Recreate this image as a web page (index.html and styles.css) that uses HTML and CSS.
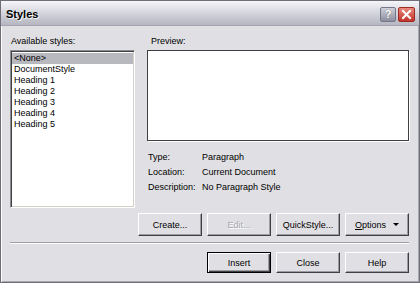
FILE: index.html
```html
<!DOCTYPE html>
<html>
<head>
<meta charset="utf-8">
<link rel="stylesheet" href="styles.css">
</head>
<body>
<div class="window">
  <div class="titlebar">
    <span class="title">Styles</span>
    <div class="caption-buttons">
      <span class="cap-btn help">?</span>
      <span class="cap-btn close">
        <svg width="11" height="11" viewBox="0 0 11 11"><path d="M2 2 L9 9 M9 2 L2 9" stroke="#fff" stroke-width="2" stroke-linecap="square"/></svg>
      </span>
    </div>
  </div>
  <div class="content">
    <div class="top">
      <div class="left">
        <div class="label">Available styles:</div>
        <div class="listbox">
          <div class="item selected">&lt;None&gt;</div>
          <div class="item">DocumentStyle</div>
          <div class="item">Heading 1</div>
          <div class="item">Heading 2</div>
          <div class="item">Heading 3</div>
          <div class="item">Heading 4</div>
          <div class="item">Heading 5</div>
        </div>
      </div>
      <div class="right">
        <div class="label preview-label">Preview:</div>
        <div class="preview"></div>
        <div class="info">
          <div class="row"><span class="key">Type:</span><span>Paragraph</span></div>
          <div class="row"><span class="key">Location:</span><span>Current Document</span></div>
          <div class="row"><span class="key">Description:</span><span>No Paragraph Style</span></div>
        </div>
      </div>
    </div>
    <div class="actions">
      <button class="btn">Create...</button>
      <button class="btn disabled">Edit...</button>
      <button class="btn">QuickStyle...</button>
      <button class="btn options"><span><u>O</u>ptions</span><span class="arrow"></span></button>
    </div>
    <div class="separator"></div>
    <div class="footer">
      <button class="btn default">Insert</button>
      <button class="btn">Close</button>
      <button class="btn">Help</button>
    </div>
  </div>
</div>
</body>
</html>
```
FILE: styles.css
```css
html, body {
  margin: 0;
  padding: 0;
  background: #e0dfe3;
}
body {
  font-family: "Liberation Sans", Arial, sans-serif;
  font-size: 9px;
  color: #000;
}
.window {
  width: 420px;
  height: 283px;
  box-sizing: border-box;
  border: 1px solid #6e6e78;
  box-shadow: inset 1px 1px 0 #fdfdfd, inset -1px -1px 0 #a8a8b0;
  background: #e0dfe3;
  display: flex;
  flex-direction: column;
}
.titlebar {
  height: 24px;
  flex: none;
  display: flex;
  align-items: center;
  justify-content: space-between;
  padding: 0 4px 0 5px;
  background: linear-gradient(to bottom, #f6f6f9 0%, #e2e2e8 30%, #c8c8d2 70%, #b6b6c2 100%);
  border-bottom: 1px solid #a4a4b0;
}
.title {
  font-weight: bold;
  font-size: 11px;
  color: #000;
  text-shadow: 1px 1px 0 #f4f4f4;
  padding-top: 1px;
}
.caption-buttons {
  display: flex;
  gap: 2px;
  padding-top: 2px;
}
.cap-btn {
  width: 16px;
  height: 15px;
  border-radius: 2px;
  display: flex;
  align-items: center;
  justify-content: center;
  box-sizing: border-box;
}
.help {
  background: linear-gradient(to bottom, #cfd0da, #8c8e9e);
  border: 1px solid #74768a;
  color: #fff;
  font-weight: bold;
  font-size: 11px;
  text-shadow: 0 0 1px #555;
}
.close {
  width: 17px;
  background: linear-gradient(to bottom, #e88a7c, #c3322a);
  border: 1px solid #9d2b24;
}
.content {
  flex: 1;
  display: flex;
  flex-direction: column;
  padding: 9px 10px 0 9px;
}
.top {
  display: flex;
}
.label {
  height: 12px;
  line-height: 12px;
  margin-bottom: 3px;
  padding-left: 1px;
}
.left {
  width: 125px;
  flex: none;
}
.listbox {
  height: 158px;
  box-sizing: border-box;
  background: #fff;
  border-top: 1px solid #8c8c94;
  border-left: 1px solid #8c8c94;
  border-right: 1px solid #fff;
  border-bottom: 1px solid #fff;
  box-shadow: inset 1px 1px 0 #404040, inset -1px -1px 0 #d4d0c8;
  padding: 2px 1px;
}
.item {
  height: 11px;
  line-height: 11px;
  padding-left: 2px;
  white-space: nowrap;
}
.item.selected {
  background: #b8b8bf;
}
.right {
  margin-left: 12px;
  flex: 1;
}
.preview-label {
  padding-left: 4px;
}
.preview {
  height: 91px;
  box-sizing: border-box;
  background: #fff;
  border: 1px solid #404040;
  box-shadow: 1px 1px 0 #fff;
}
.info {
  margin-top: 9px;
  padding-left: 1px;
}
.row {
  display: flex;
  height: 15px;
  line-height: 15px;
}
.key {
  width: 54px;
  flex: none;
}
.actions {
  margin-top: 5px;
  display: flex;
  justify-content: flex-end;
  gap: 5px;
}
.btn {
  font-family: "Liberation Sans", Arial, sans-serif;
  font-size: 9px;
  color: #000;
  background: #e0dfe3;
  box-sizing: border-box;
  width: 64px;
  height: 23px;
  padding: 0;
  margin: 0;
  border-top: 1px solid #fff;
  border-left: 1px solid #fff;
  border-right: 1px solid #404040;
  border-bottom: 1px solid #404040;
  box-shadow: inset -1px -1px 0 #9c9ca4;
  display: flex;
  align-items: center;
  justify-content: center;
}
.btn.disabled {
  color: #a8a8ac;
  text-shadow: 1px 1px 0 #fff;
}
.options {
  gap: 7px;
}
.arrow {
  width: 0;
  height: 0;
  border-left: 3px solid transparent;
  border-right: 3px solid transparent;
  border-top: 3px solid #000;
}
.separator {
  margin-top: 6px;
  height: 1px;
  background: #a0a0a8;
  border-bottom: 1px solid #fff;
}
.footer {
  margin-top: 8px;
  display: flex;
  justify-content: flex-end;
  gap: 5px;
}
.footer .btn {
  height: 21px;
}
.btn.default {
  border: 1px solid #000;
  box-shadow: inset 1px 1px 0 #fff, inset -1px -1px 0 #404040, inset -2px -2px 0 #9c9ca4;
}
```
